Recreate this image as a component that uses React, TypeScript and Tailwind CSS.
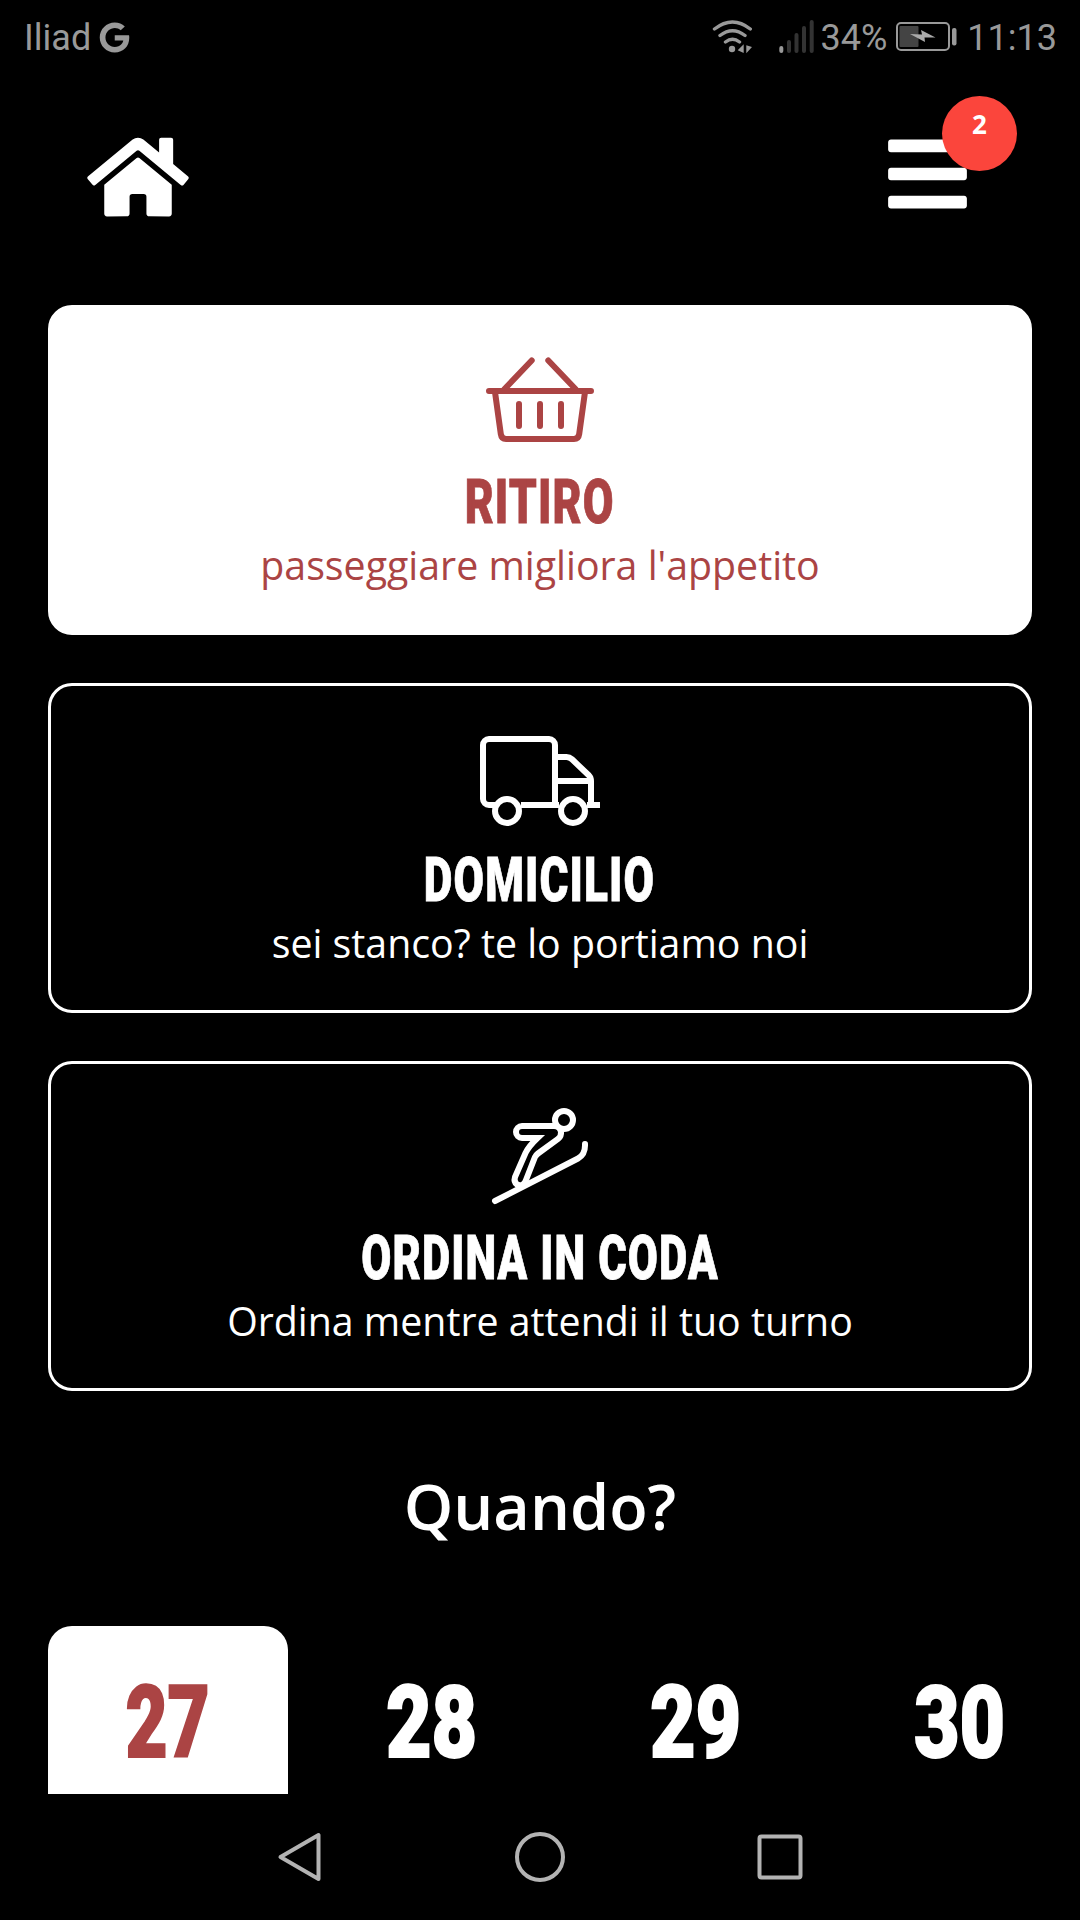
import type { ReactNode } from "react";
import clsx from "clsx";
import { FaBars, FaGoogle, FaHome } from "react-icons/fa";

type OrderMode = {
  id: string;
  title: string;
  titleClass: string;
  subtitle: string;
  icon: ReactNode;
};

const iconProps = {
  viewBox: "0 0 120 120",
  fill: "none",
  stroke: "currentColor",
  strokeWidth: 6,
  className: "size-[120px] shrink-0",
};

function BasketIcon() {
  return (
    <svg {...iconProps} strokeLinecap="round">
      <path d="M9 48H111M51.7 17.5 24.5 46M68.3 17.5 95.5 46" />
      <path d="M15 49 20.8 91Q21.5 96 26 96H94Q98.5 96 99.2 91L105 49" />
      <path d="M39 61V83M60 61V83M81 61V83" />
    </svg>
  );
}

function TruckIcon() {
  return (
    <svg {...iconProps}>
      <path d="M15 84H9A6 6 0 0 1 3 78V24A6 6 0 0 1 9 18H69A6 6 0 0 1 75 24V84" />
      <path d="M75 36H86.5Q89.5 36 92 38.3L109 54.5Q111 56.5 111 60V84M75 60H111M41 84H79M107 84H120" />
      <circle cx="27" cy="90" r="12" />
      <circle cx="93" cy="90" r="12" />
    </svg>
  );
}

function SkierIcon() {
  return (
    <svg {...iconProps} strokeLinecap="round">
      <circle cx="84" cy="21" r="9" />
      <path d="M74 27H42A6 6 0 0 0 42 39H57.5Q49 47 45.5 54L35 78Q33.5 83 37 85.5Q43.5 88 46 81L55 58Q56 56 58 54.5L78 40Q81.5 37 81 33Q80 27 74 27Z" />
      <path d="M15 102 98 59.5Q105.5 55.5 105 45" />
    </svg>
  );
}

const modes: OrderMode[] = [
  {
    id: "ritiro",
    title: "RITIRO",
    titleClass: "scale-x-[0.73]",
    subtitle: "passeggiare migliora l'appetito",
    icon: <BasketIcon />,
  },
  {
    id: "domicilio",
    title: "DOMICILIO",
    titleClass: "scale-x-[0.725]",
    subtitle: "sei stanco? te lo portiamo noi",
    icon: <TruckIcon />,
  },
  {
    id: "coda",
    title: "ORDINA IN CODA",
    titleClass: "scale-x-[0.715]",
    subtitle: "Ordina mentre attendi il tuo turno",
    icon: <SkierIcon />,
  },
];

const days = [27, 28, 29, 30];

function StatusBar() {
  return (
    <div className="flex h-[72px] items-center pl-6 pr-[23px] pt-0.5 font-[Roboto,sans-serif] text-[36px] leading-[72px] text-[#999999]">
      <span className="pt-0.5">Iliad</span>
      <FaGoogle className="ml-2 size-[31px]" />
      <div className="ml-auto flex items-center">
        <svg viewBox="0 0 41 34" className="h-[34px] w-[41px]" fill="none" stroke="currentColor" strokeWidth="3.4" strokeLinecap="round">
          <path d="M2.5 9Q20.5-5 38.3 9M8 15.5Q20.5 6 33 15.5M13.5 22Q20.5 16.5 27.5 22" />
          <circle cx="20" cy="29" r="3.2" fill="currentColor" stroke="none" />
          <path d="M25.7 30.3 31.7 24.3V33ZM34.3 25.3V33.3L40 27Z" fill="currentColor" stroke="none" />
        </svg>
        <svg viewBox="0 0 36 34" className="ml-[26px] h-[34px] w-9" fill="none" stroke="#333333" strokeWidth="4" strokeLinecap="round">
          <path d="M2.3 28V31" stroke="#999999" />
          <path d="M10 22V31M17.5 15V31M25 8V31M32.7 2V31" />
        </svg>
        <span className="ml-1.5 pt-0.5">34%</span>
        <svg viewBox="0 0 62 30" className="ml-[9px] h-[30px] w-[62px]">
          <rect x="1" y="1" width="52" height="27" rx="4" fill="none" stroke="#999999" strokeWidth="2" />
          <rect x="3.5" y="4" width="19" height="21" rx="1" fill="#444444" />
          <path d="M14 12 26 12.5 25 8 39.5 15.5 28.5 15.5 29 20Z" fill="#aaaaaa" />
          <rect x="56" y="6" width="4.5" height="17.5" rx="2" fill="#999999" />
        </svg>
        <span className="ml-[9px] pt-0.5">11:13</span>
      </div>
    </div>
  );
}

function Header() {
  return (
    <header className="flex h-[233px] items-start justify-between pl-[87px] pr-[113px]">
      <FaHome className="mt-[60px] h-[90px] w-[102px]" />
      <div className="relative mt-[57px]">
        <FaBars className="h-[90px] w-[79px]" />
        <span className="absolute -top-[33px] left-[54px] size-[75px] rounded-full bg-[#fb453c] pt-[9px] text-center text-[26px] font-bold leading-[38px]">
          2
        </span>
      </div>
    </header>
  );
}

function ModeCard({ mode, active }: { mode: OrderMode; active: boolean }) {
  return (
    <button
      className={clsx(
        "flex h-[330px] flex-col items-center rounded-[24px] border-[3px] border-white pt-[35px]",
        active ? "bg-white text-[#ab4444]" : "text-white",
      )}
    >
      {mode.icon}
      <span
        className={clsx(
          "mt-[3px] h-[72px] whitespace-nowrap font-[Roboto,sans-serif] text-[61px] font-black leading-[72px] tracking-[1.5px] [-webkit-text-stroke:0.8px_currentColor]",
          mode.titleClass,
        )}
      >
        {mode.title}
      </span>
      <span className="whitespace-nowrap text-[39.3px] leading-[54px]">{mode.subtitle}</span>
    </button>
  );
}

function DayTab({ day, active }: { day: number; active: boolean }) {
  return (
    <button
      className={clsx(
        "flex h-[240px] w-[240px] shrink-0 justify-center rounded-t-[24px] pt-[37px]",
        active ? "bg-white text-[#ab4444]" : "text-white",
      )}
    >
      <span
        className={clsx(
          "font-[Roboto,sans-serif] text-[101px] font-black leading-[120px] [-webkit-text-stroke:2px_currentColor]",
          active ? "scale-x-[0.72]" : "scale-x-[0.78]",
        )}
      >
        {day}
      </span>
    </button>
  );
}

function NavigationBar() {
  return (
    <nav className="flex h-[126px] items-center justify-center gap-[190px] text-[#b3b3b3]">
      <svg viewBox="0 0 50 50" className="size-[50px]" fill="none" stroke="currentColor" strokeWidth="4" strokeLinejoin="round">
        <path d="M5.5 25 43.5 3V47Z" />
      </svg>
      <svg viewBox="0 0 50 50" className="size-[50px]" fill="none" stroke="currentColor" strokeWidth="4">
        <circle cx="25" cy="25" r="23" />
      </svg>
      <svg viewBox="0 0 50 50" className="size-[50px]" fill="none" stroke="currentColor" strokeWidth="4">
        <rect x="4.5" y="4.5" width="41" height="41" rx="2" />
      </svg>
    </nav>
  );
}

export default function App() {
  return (
    <div className="flex h-[1920px] w-[1080px] flex-col overflow-hidden bg-black font-['Open_Sans',sans-serif] text-white">
      <StatusBar />
      <Header />
      <main className="flex min-h-0 flex-1 flex-col overflow-hidden px-12">
        <div className="flex flex-col gap-12">
          {modes.map((mode) => (
            <ModeCard key={mode.id} mode={mode} active={mode.id === "ritiro"} />
          ))}
        </div>
        <h2 className="mt-[73px] h-[84px] text-center text-[63px] font-semibold leading-[84px]">Quando?</h2>
        <div className="mt-[78px] flex gap-6">
          {days.map((day) => (
            <DayTab key={day} day={day} active={day === 27} />
          ))}
        </div>
      </main>
      <NavigationBar />
    </div>
  );
}
